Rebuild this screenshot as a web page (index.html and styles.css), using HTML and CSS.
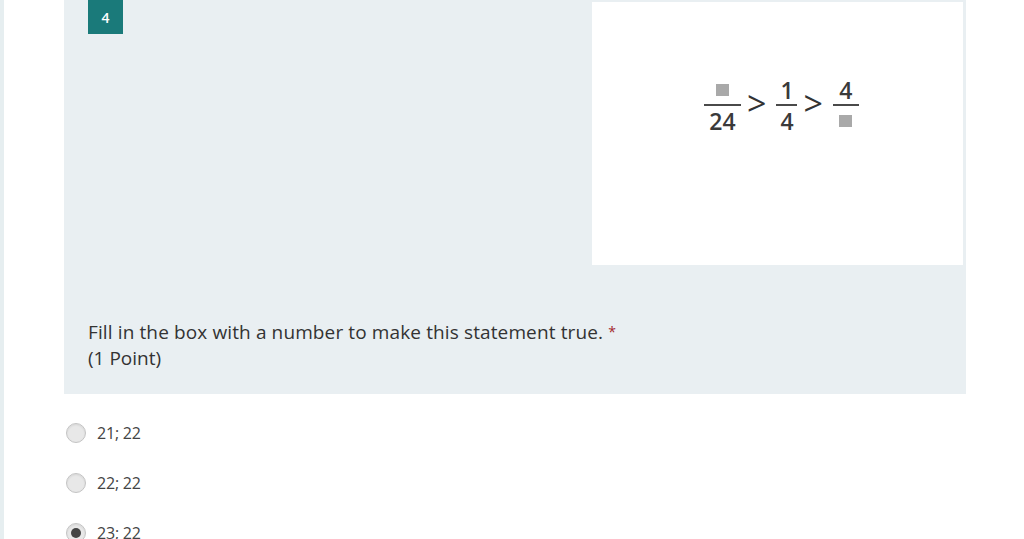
FILE: index.html
```html
<!DOCTYPE html>
<html>
<head>
<meta charset="utf-8">
<link rel="stylesheet" href="styles.css">
</head>
<body>
<div class="page">
  <div class="question">
    <div class="q-top">
      <div class="badge">4</div>
      <div class="figure">
        <div class="math">
          <div class="frac f1"><span class="num"><i class="box"></i></span><span class="bar"></span><span class="den">24</span></div>
          <span class="gt">&gt;</span>
          <div class="frac f2"><span class="num">1</span><span class="bar"></span><span class="den">4</span></div>
          <span class="gt">&gt;</span>
          <div class="frac f3"><span class="num">4</span><span class="bar"></span><span class="den"><i class="box"></i></span></div>
        </div>
      </div>
    </div>
    <div class="q-title">Fill in the box with a number to make this statement true. <span class="req">*</span></div>
    <div class="q-points">(1 Point)</div>
  </div>
  <div class="options">
    <label class="opt"><span class="radio"></span><span>21; 22</span></label>
    <label class="opt"><span class="radio"></span><span>22; 22</span></label>
    <label class="opt"><span class="radio checked"></span><span>23; 22</span></label>
  </div>
</div>
</body>
</html>
```
FILE: styles.css
```css
html, body {
  margin: 0;
  padding: 0;
  background: #ffffff;
  height: 100%;
  overflow: hidden;
}
body {
  font-family: "Open Sans", "Noto Sans", sans-serif;
  color: #333;
}
.page {
  border-left: 4px solid #e6eef0;
  min-height: 100%;
  box-sizing: border-box;
  padding-left: 60px;
}
.question {
  width: 902px;
  background: #e9eff2;
  box-sizing: border-box;
  padding: 0 0 23px 24px;
}
.q-top {
  display: flex;
  justify-content: space-between;
  align-items: flex-start;
  height: 319px;
}
.badge {
  width: 35px;
  height: 34px;
  background: #1a7a7a;
  color: #fff;
  font-size: 14px;
  font-weight: 600;
  display: flex;
  align-items: center;
  justify-content: center;
}
.figure {
  margin-top: 2px;
  margin-right: 3px;
  width: 371px;
  height: 263px;
  background: #fff;
  box-sizing: border-box;
  padding: 76px 0 0 112px;
}
.math {
  display: flex;
  align-items: center;
  color: #3a3a3a;
  font-family: "Open Sans", sans-serif;
  font-weight: 600;
  font-size: 23px;
  line-height: 1;
}
.frac {
  display: flex;
  flex-direction: column;
  align-items: center;
}
.f1 { width: 37px; }
.f2 { width: 21px; }
.f3 { width: 26px; }
.num, .den {
  height: 24px;
  display: flex;
  align-items: center;
  justify-content: center;
}
.bar {
  display: block;
  width: 100%;
  height: 2px;
  background: #4a4a4a;
  margin: 2px 0 3px;
}
.box {
  display: block;
  width: 13px;
  height: 12px;
  background: #a9a9a9;
}
.gt {
  font-weight: 400;
  font-size: 34px;
  margin: 0 10px 6px 6px;
  color: #333;
}
.q-title {
  font-size: 19px;
  line-height: 26px;
  color: #333;
  letter-spacing: 0.12px;
}
.req {
  color: #a4262c;
  font-size: 14px;
  vertical-align: top;
}
.q-points {
  font-size: 19px;
  line-height: 26px;
  color: #333;
}
.options {
  padding-top: 14px;
}
.opt {
  display: flex;
  align-items: center;
  height: 50px;
  font-size: 16px;
  color: #444;
  letter-spacing: -0.2px;
}
.radio {
  width: 18px;
  height: 18px;
  border-radius: 50%;
  border: 1px solid #c4c4c4;
  background: #e8e8e8;
  box-shadow: inset 0 1px 2px rgba(0,0,0,0.08);
  margin: 0 11px 0 2px;
  position: relative;
}
.radio.checked::after {
  content: "";
  position: absolute;
  left: 4px;
  top: 4px;
  width: 10px;
  height: 10px;
  border-radius: 50%;
  background: #444;
}
```
